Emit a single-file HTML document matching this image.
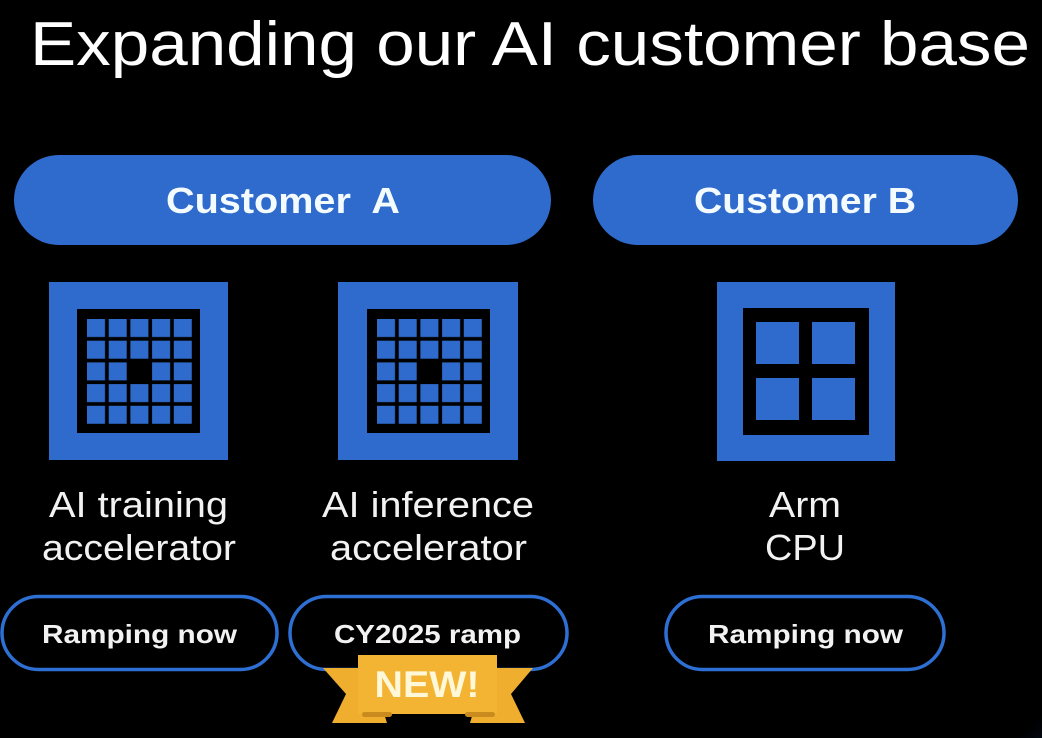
<!DOCTYPE html>
<html><head><meta charset="utf-8"><style>
html,body{margin:0;padding:0;background:#000;}
svg{display:block}
text{font-family:"Liberation Sans",Arial,sans-serif;}
</style></head><body>
<svg width="1042" height="738" viewBox="0 0 1042 738" xmlns="http://www.w3.org/2000/svg">
<defs>
<pattern id="g5" patternUnits="userSpaceOnUse" width="21.7" height="21.7"><rect x="0" y="0" width="18" height="18" fill="#2f6bcd"/></pattern>
<radialGradient id="sw" cx="1300" cy="1050" r="520" gradientUnits="userSpaceOnUse">
<stop offset="0.55" stop-color="#000" stop-opacity="0"/>
<stop offset="0.75" stop-color="#0d2a5a" stop-opacity="0.55"/>
<stop offset="0.82" stop-color="#000" stop-opacity="0"/>
</radialGradient>
</defs>
<rect width="1042" height="738" fill="#000"/>
<rect width="1042" height="738" fill="url(#sw)"/>
<text x="30" y="65" font-size="62" fill="#fff" textLength="1000" lengthAdjust="spacingAndGlyphs">Expanding our AI customer base</text>

<rect x="14" y="155" width="537" height="90" rx="45" fill="#2f6bcd"/>
<text x="166" y="213" font-size="36" font-weight="bold" fill="#f4fbff" textLength="234" lengthAdjust="spacingAndGlyphs" xml:space="preserve">Customer  A</text>
<rect x="593" y="155" width="425" height="90" rx="45" fill="#2f6bcd"/>
<text x="694" y="213" font-size="36" font-weight="bold" fill="#f4fbff" textLength="222" lengthAdjust="spacingAndGlyphs">Customer B</text>

<!-- icon 1 -->
<rect x="49" y="282" width="179" height="178" fill="#2f6bcd"/>
<rect x="77" y="309" width="123" height="124" fill="#000"/>
<g transform="translate(87,319)"><rect width="105" height="105" fill="url(#g5)"/></g>
<rect x="128" y="360" width="22" height="22" fill="#000"/>
<!-- icon 2 -->
<rect x="338" y="282" width="180" height="178" fill="#2f6bcd"/>
<rect x="367" y="309" width="123" height="124" fill="#000"/>
<g transform="translate(377,319)"><rect width="105" height="105" fill="url(#g5)"/></g>
<rect x="418" y="360" width="22" height="22" fill="#000"/>
<!-- icon 3 -->
<rect x="717" y="282" width="178" height="179" fill="#2f6bcd"/>
<rect x="743" y="308" width="126" height="127" fill="#000"/>
<rect x="756" y="322" width="43" height="42" fill="#2f6bcd"/>
<rect x="812" y="322" width="43" height="42" fill="#2f6bcd"/>
<rect x="756" y="378" width="43" height="42" fill="#2f6bcd"/>
<rect x="812" y="378" width="43" height="42" fill="#2f6bcd"/>

<g font-size="36" fill="#f2f2f2">
<text x="49" y="517" textLength="179" lengthAdjust="spacingAndGlyphs">AI training</text>
<text x="42" y="560" textLength="194" lengthAdjust="spacingAndGlyphs">accelerator</text>
<text x="322" y="517" textLength="212" lengthAdjust="spacingAndGlyphs">AI inference</text>
<text x="330" y="560" textLength="197" lengthAdjust="spacingAndGlyphs">accelerator</text>
<text x="769" y="517" textLength="72" lengthAdjust="spacingAndGlyphs">Arm</text>
<text x="765" y="560" textLength="80" lengthAdjust="spacingAndGlyphs">CPU</text>
</g>

<g fill="#000" stroke="#2e6fd4" stroke-width="3.5">
<rect x="2" y="596.5" width="275" height="73" rx="36.5"/>
<rect x="290" y="596.5" width="277" height="73" rx="36.5"/>
<rect x="666" y="596.5" width="278" height="73" rx="36.5"/>
</g>
<g font-size="26" font-weight="bold" fill="#f2f2f2">
<text x="42" y="643" textLength="195" lengthAdjust="spacingAndGlyphs">Ramping now</text>
<text x="334" y="643" textLength="187" lengthAdjust="spacingAndGlyphs">CY2025 ramp</text>
<text x="708" y="643" textLength="195" lengthAdjust="spacingAndGlyphs">Ramping now</text>
</g>

<!-- NEW banner -->
<polygon points="323,668 370,668 387,723 332,723 346,694" fill="#efae2e"/>
<polygon points="533,668 486,668 470,723 525,723 511,694" fill="#efae2e"/>
<polygon points="358,655 497,655 497,714 358,714" fill="#f2b432"/>
<rect x="362" y="712" width="30" height="5" rx="2.5" fill="#c98a1e"/>
<rect x="465" y="712" width="30" height="5" rx="2.5" fill="#c98a1e"/>
<text x="427" y="697" font-size="37" font-weight="bold" fill="#fff8d8" text-anchor="middle" textLength="105" lengthAdjust="spacingAndGlyphs">NEW!</text>
</svg>
</body></html>
